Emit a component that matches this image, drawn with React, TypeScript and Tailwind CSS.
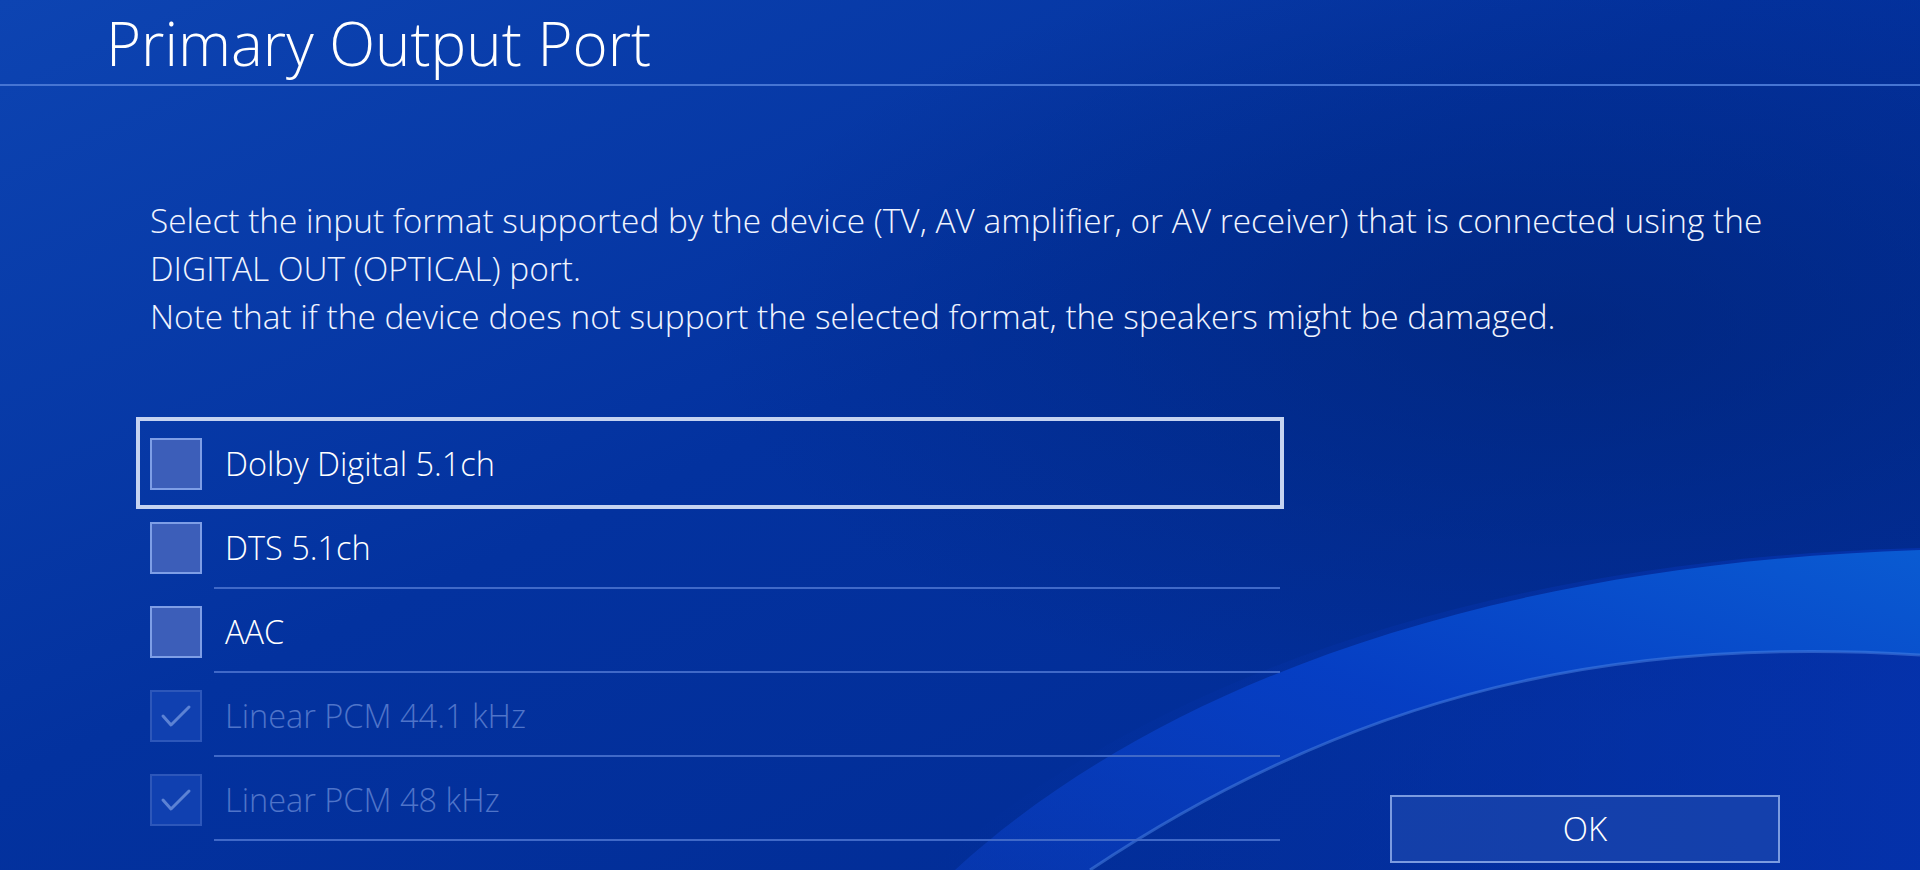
import React from "react";

const font = { fontFamily: '"Open Sans", "Noto Sans", sans-serif' };

function Background() {
  return (
    <svg className="absolute inset-0 h-full w-full" viewBox="0 0 1920 870" preserveAspectRatio="none">
      <defs>
        <linearGradient id="base" x1="0" y1="0" x2="1" y2="1">
          <stop offset="0" stopColor="#0d44b2" />
          <stop offset="0.45" stopColor="#03329f" />
          <stop offset="1" stopColor="#012a92" />
        </linearGradient>
        <radialGradient id="dark" cx="0.82" cy="0.38" r="0.45">
          <stop offset="0" stopColor="#00216f" stopOpacity="0.55" />
          <stop offset="1" stopColor="#00216f" stopOpacity="0" />
        </radialGradient>
        <linearGradient id="band" x1="0" y1="1" x2="1" y2="0">
          <stop offset="0" stopColor="#0b3fc4" stopOpacity="0.5" />
          <stop offset="0.5" stopColor="#0640c8" stopOpacity="0.9" />
          <stop offset="1" stopColor="#0a5bd2" stopOpacity="1" />
        </linearGradient>
        <linearGradient id="lower" x1="0" y1="0" x2="1" y2="0">
          <stop offset="0" stopColor="#0533a8" stopOpacity="0" />
          <stop offset="1" stopColor="#0533b0" stopOpacity="0.8" />
        </linearGradient>
      </defs>
      <rect width="1920" height="870" fill="url(#base)" />
      <rect width="1920" height="870" fill="url(#dark)" />
      <path d="M 930 870 C 1120 700 1450 560 1920 548 L 1920 870 Z" fill="url(#lower)" />
      <path d="M 955 870 C 1140 700 1460 565 1920 550 L 1920 655 C 1620 636 1360 690 1090 870 Z" fill="url(#band)" />
      <path d="M 1090 870 C 1360 690 1620 636 1920 655" fill="none" stroke="#4d86e6" strokeOpacity="0.5" strokeWidth="3" />
    </svg>
  );
}

function Check({ disabled }: { disabled?: boolean }) {
  return (
    <div
      className={
        disabled
          ? "flex h-[52px] w-[52px] shrink-0 items-center justify-center border-2 border-[#2d57ba] bg-[#1040b0]"
          : "flex h-[52px] w-[52px] shrink-0 items-center justify-center border-2 border-[#7e9ee6] bg-[#3c5eb9]"
      }
    >
      {disabled && (
        <svg width="40" height="40" viewBox="0 0 40 40">
          <path d="M7 20 L15 29 L33 11" fill="none" stroke="#5c82d4" strokeWidth="3" strokeLinecap="round" strokeLinejoin="round" />
        </svg>
      )}
    </div>
  );
}

const rows = [
  { label: "Dolby Digital 5.1ch", focused: true },
  { label: "DTS 5.1ch" },
  { label: "AAC" },
  { label: "Linear PCM 44.1 kHz", disabled: true },
  { label: "Linear PCM 48 kHz", disabled: true },
];

export default function App() {
  return (
    <div className="relative h-[870px] w-[1920px] overflow-hidden text-white" style={font}>
      <Background />
      <div className="relative">
        <div className="h-[86px] border-b-2 border-[#4675d3] pl-[106px]">
          <h1 className="pt-[3px] text-[60px] font-light leading-[80px] text-white">Primary Output Port</h1>
        </div>
        <div className="ml-[150px] mt-[110px] text-[33.4px] font-light leading-[48px] text-[#f0f4ff]">
          <p>Select the input format supported by the device (TV, AV amplifier, or AV receiver) that is connected using the</p>
          <p>DIGITAL OUT (OPTICAL) port.</p>
          <p>Note that if the device does not support the selected format, the speakers might be damaged.</p>
        </div>
        <div className="mt-[81px] flex items-start">
          <div className="ml-[136px] w-[1148px]">
            {rows.map((r) => (
              <div key={r.label} className="relative flex h-[84px] items-start pl-[14px] pt-[17px]">
                {r.focused && <div className="absolute -bottom-[4px] -top-[4px] left-0 right-0 border-[4px] border-[#c5d3f1]" />}
                <Check disabled={r.disabled} />
                <span
                  className={
                    r.disabled
                      ? "ml-[23px] text-[32.5px] font-light leading-[52px] text-[#4f74c9]"
                      : "ml-[23px] text-[32.5px] font-light leading-[52px] text-white"
                  }
                >
                  {r.label}
                </span>
                {!r.focused && <div className="absolute bottom-0 left-[78px] right-[4px] h-[2px] bg-[#4069c8]" />}
              </div>
            ))}
          </div>
          <button className="ml-[106px] mt-[374px] flex h-[68px] w-[390px] items-center justify-center border-2 border-[#7b9be0] bg-[#1f4bb0]/60 text-[33px] font-light text-white">
            OK
          </button>
        </div>
      </div>
    </div>
  );
}
